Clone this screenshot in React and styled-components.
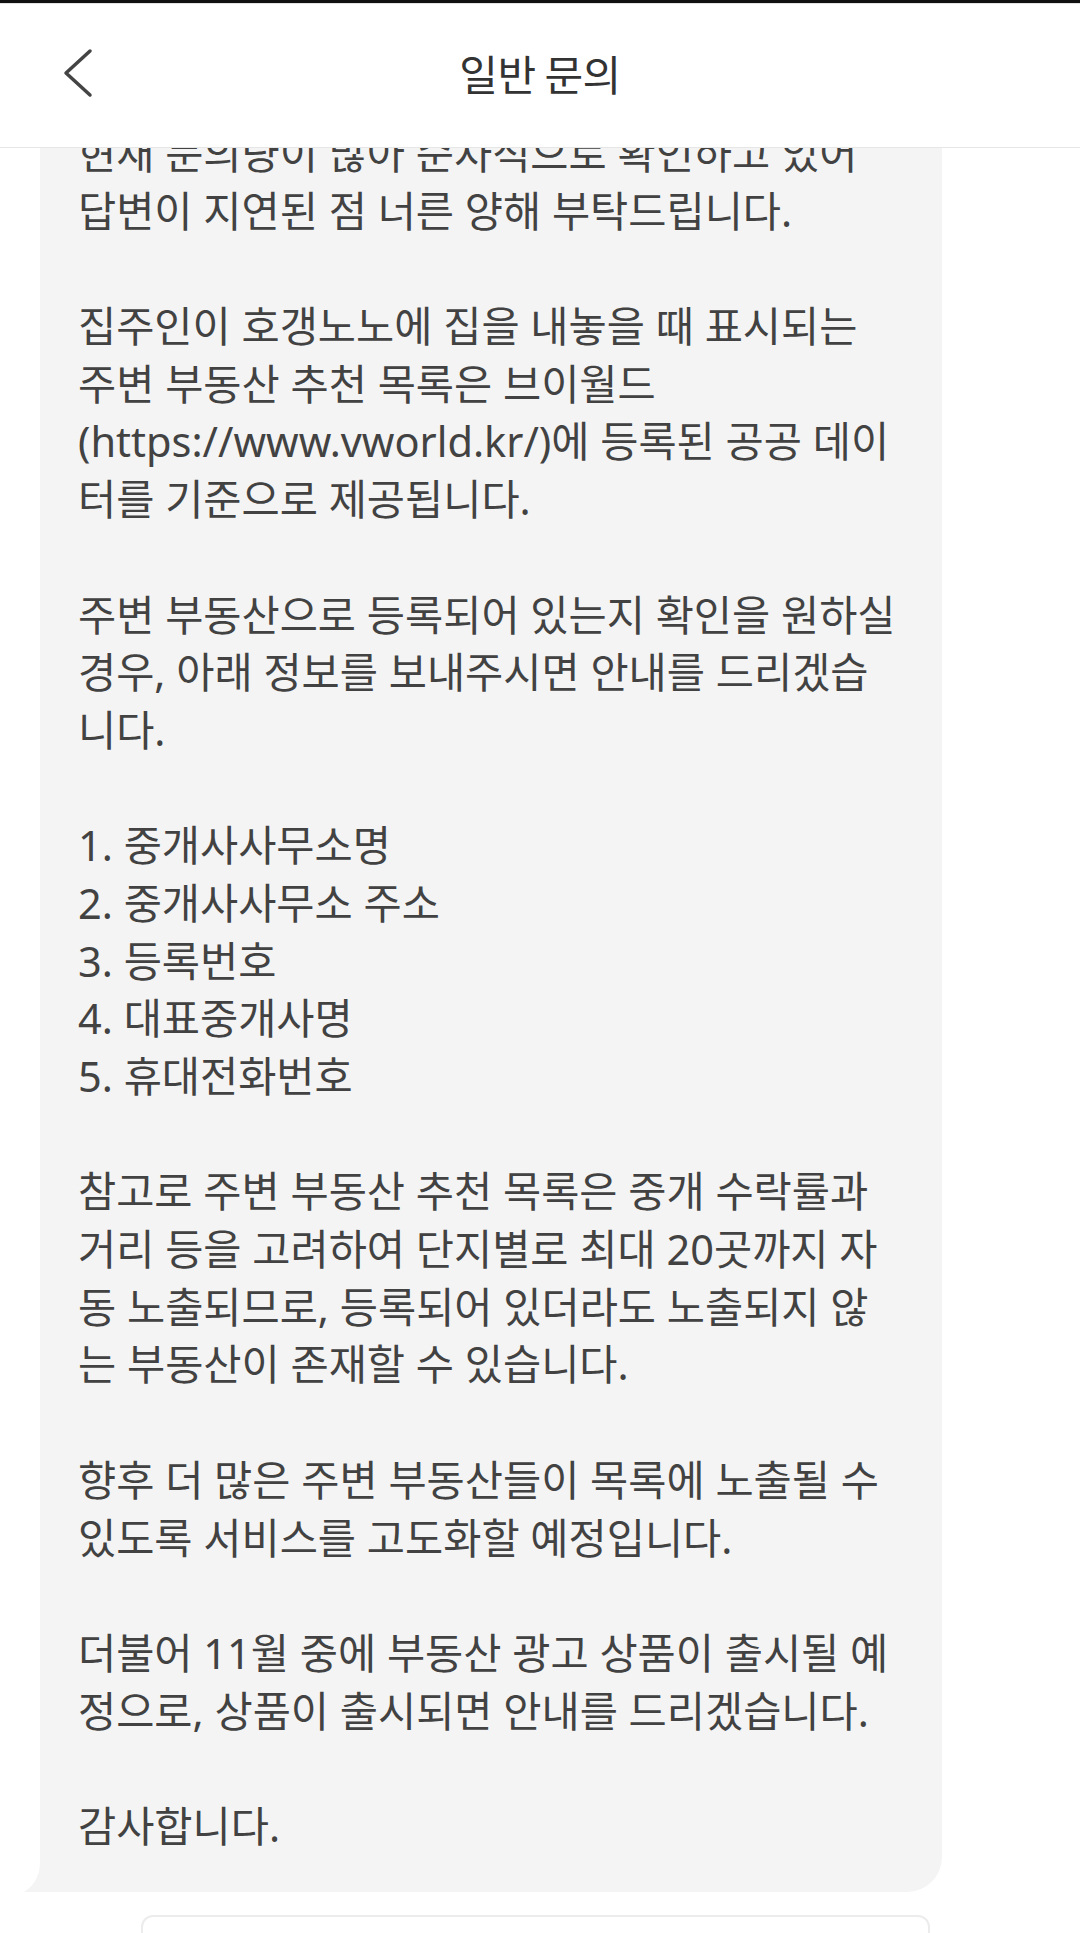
import React from "react";
import styled, { createGlobalStyle } from "styled-components";

const GlobalStyle = createGlobalStyle`
  html, body {
    margin: 0;
    padding: 0;
    background: #ffffff;
  }
  body {
    font-family: "Noto Sans", "Noto Sans CJK KR", sans-serif;
    -webkit-font-smoothing: antialiased;
  }
  * {
    box-sizing: border-box;
  }
`;

const Page = styled.div`
  width: 1080px;
  height: 1933px;
  display: flex;
  flex-direction: column;
  overflow: hidden;
  background: #ffffff;
  border-top: 3px solid #111111;
`;

const Header = styled.header`
  position: relative;
  z-index: 2;
  height: 145px;
  flex-shrink: 0;
  display: grid;
  grid-template-columns: 1fr auto 1fr;
  align-items: center;
  background: #ffffff;
  border-top: 1px solid #e4e4e4;
  border-bottom: 1px solid #e6e6e6;
  padding-bottom: 6px;
`;

const BackButton = styled.button`
  justify-self: start;
  display: flex;
  align-items: center;
  justify-content: center;
  margin-left: 52px;
  padding: 0;
  width: 52px;
  height: 64px;
  border: none;
  background: transparent;
  cursor: pointer;
`;

const Title = styled.h1`
  margin: 0;
  font-family: "Noto Sans CJK KR", sans-serif;
  font-size: 42px;
  font-weight: 400;
  color: #333333;
  letter-spacing: -0.5px;
`;

const Body = styled.main`
  flex: 1;
  overflow: hidden;
`;

const Thread = styled.div`
  margin-top: -59px;
  padding: 0 138px 0 40px;
`;

const Bubble = styled.div`
  position: relative;
  background: #f4f4f4;
  border-radius: 35px 35px 35px 0;
  padding: 36px 38px;
  color: #424242;
  font-family: "Noto Sans", "Noto Sans CJK KR", sans-serif;
  font-size: 41.5px;
`;

const Tail = styled.svg`
  position: absolute;
  left: -18px;
  bottom: 0;
  width: 60px;
  height: 40px;
`;

const Line = styled.div`
  height: 57.7px;
  line-height: 57.7px;
  white-space: nowrap;
`;

const InputCard = styled.div`
  margin: 23px 12px 0 101px;
  height: 80px;
  border: 2px solid #ececec;
  border-radius: 12px;
  background: #ffffff;
`;

const lines = [
  "현재 문의량이 많아 순차적으로 확인하고 있어",
  "답변이 지연된 점 너른 양해 부탁드립니다.",
  "",
  "집주인이 호갱노노에 집을 내놓을 때 표시되는",
  "주변 부동산 추천 목록은 브이월드",
  "(https://www.vworld.kr/)에 등록된 공공 데이",
  "터를 기준으로 제공됩니다.",
  "",
  "주변 부동산으로 등록되어 있는지 확인을 원하실",
  "경우, 아래 정보를 보내주시면 안내를 드리겠습",
  "니다.",
  "",
  "1. 중개사사무소명",
  "2. 중개사사무소 주소",
  "3. 등록번호",
  "4. 대표중개사명",
  "5. 휴대전화번호",
  "",
  "참고로 주변 부동산 추천 목록은 중개 수락률과",
  "거리 등을 고려하여 단지별로 최대 20곳까지 자",
  "동 노출되므로, 등록되어 있더라도 노출되지 않",
  "는 부동산이 존재할 수 있습니다.",
  "",
  "향후 더 많은 주변 부동산들이 목록에 노출될 수",
  "있도록 서비스를 고도화할 예정입니다.",
  "",
  "더불어 11월 중에 부동산 광고 상품이 출시될 예",
  "정으로, 상품이 출시되면 안내를 드리겠습니다.",
  "",
  "감사합니다.",
];

function ChevronLeft() {
  return (
    <svg width="30" height="50" viewBox="0 0 30 50" fill="none">
      <path
        d="M27 3 L3 25 L27 47"
        stroke="#444444"
        strokeWidth="3.5"
        strokeLinecap="round"
        strokeLinejoin="round"
      />
    </svg>
  );
}

export default function App() {
  return (
    <>
      <GlobalStyle />
      <Page>
        <Header>
          <BackButton aria-label="뒤로">
            <ChevronLeft />
          </BackButton>
          <Title>일반 문의</Title>
          <span />
        </Header>
        <Body>
          <Thread>
            <Bubble>
              {lines.map((text, i) => (
                <Line key={i}>{text || "\u00a0"}</Line>
              ))}
              <Tail viewBox="0 0 60 40">
                <path
                  d="M18 0 L18 10 C18 24 12 34 2 40 L60 40 L60 0 Z"
                  fill="#f4f4f4"
                />
              </Tail>
            </Bubble>
            <InputCard />
          </Thread>
        </Body>
      </Page>
    </>
  );
}
